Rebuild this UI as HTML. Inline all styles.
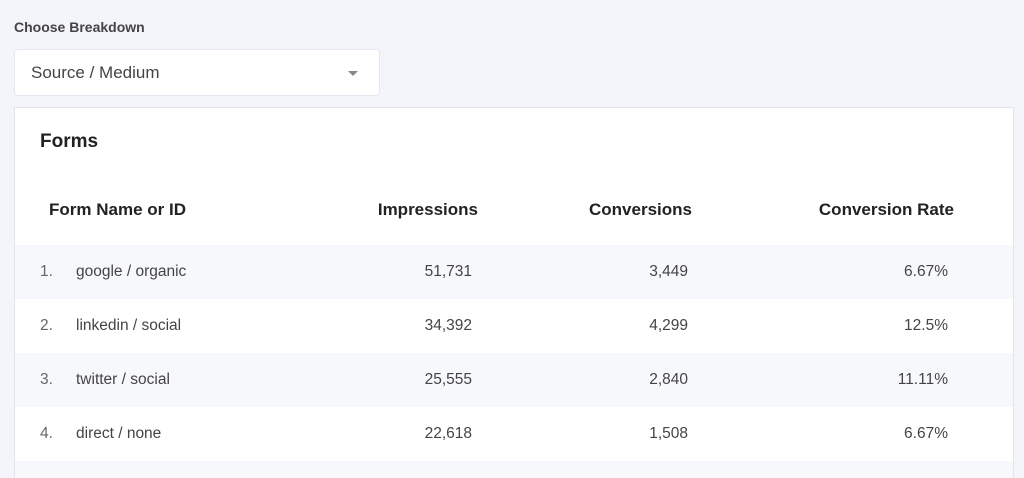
<!DOCTYPE html>
<html><head><meta charset="utf-8"><style>
html,body{margin:0;width:1024px;height:478px;overflow:hidden}
body{background:#f3f5fb;font-family:"Liberation Sans",Arial,sans-serif;position:relative;color:#393f4c}
.lbl{position:absolute;left:14px;top:19px;font-size:14px;font-weight:bold;color:#444}
.sel{position:absolute;left:14px;top:49px;width:366px;height:47px;background:#fff;border:1px solid #e4e7ef;border-radius:4px;box-sizing:border-box}
.sel span{position:absolute;left:16px;top:13px;font-size:17px;color:#444}
.sel i{position:absolute;right:21px;top:21px;border-left:5px solid transparent;border-right:5px solid transparent;border-top:5px solid #888}
.card{position:absolute;left:14px;top:107px;width:1000px;height:371px;background:#fff;border:1px solid #e2e5ee;border-bottom:none;box-sizing:border-box;overflow:hidden}
.t{position:absolute;left:25px;top:23px;font-size:19px;font-weight:bold;color:#222}
.h,.r{position:absolute;left:0;width:998px;font-size:17px}
.h{top:92px;font-weight:bold;color:#222}
.r{height:54px;line-height:54px;color:#444;font-size:15.5px}
.s{background:#f7f8fc}
.c{position:absolute}
</style></head><body>
<div class="lbl">Choose Breakdown</div>
<div class="sel"><span>Source / Medium</span><i></i></div>
<div class="card">
<div class="t">Forms</div>
<div class="h"><span class="c" style="left:34px">Form Name or ID</span><span class="c" style="right:535px">Impressions</span><span class="c" style="right:321px">Conversions</span><span class="c" style="right:59px">Conversion Rate</span></div>
<div class="r s" style="top:137px"><span class="c" style="left:25px;color:#666">1.</span><span class="c" style="left:61px">google / organic</span><span class="c" style="right:541px">51,731</span><span class="c" style="right:325px">3,449</span><span class="c" style="right:65px">6.67%</span></div>
<div class="r" style="top:191px"><span class="c" style="left:25px;color:#666">2.</span><span class="c" style="left:61px">linkedin / social</span><span class="c" style="right:541px">34,392</span><span class="c" style="right:325px">4,299</span><span class="c" style="right:65px">12.5%</span></div>
<div class="r s" style="top:245px"><span class="c" style="left:25px;color:#666">3.</span><span class="c" style="left:61px">twitter / social</span><span class="c" style="right:541px">25,555</span><span class="c" style="right:325px">2,840</span><span class="c" style="right:65px">11.11%</span></div>
<div class="r" style="top:299px"><span class="c" style="left:25px;color:#666">4.</span><span class="c" style="left:61px">direct / none</span><span class="c" style="right:541px">22,618</span><span class="c" style="right:325px">1,508</span><span class="c" style="right:65px">6.67%</span></div>
<div class="r s" style="top:353px;height:18px"></div>
</div>
</body></html>
